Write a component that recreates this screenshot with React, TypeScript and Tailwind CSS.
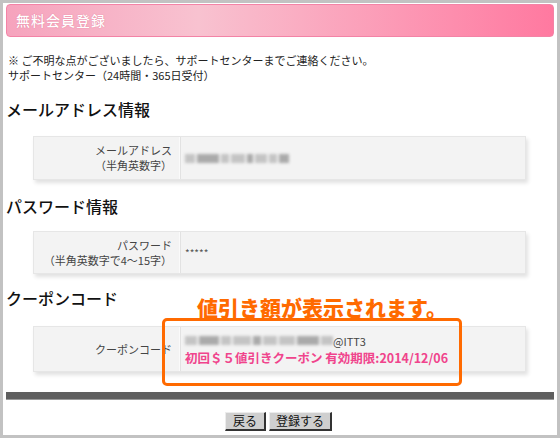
const jp = "font-['MS_PGothic','Noto_Sans_CJK_JP',sans-serif]";

function Blur({ widths }: { widths: number[] }) {
  return (
    <span className="inline-flex items-center gap-[2px] blur-[1.5px] align-middle">
      {widths.map((w, i) => (
        <span
          key={i}
          className={`inline-block h-[9px] ${i % 3 === 1 ? "bg-[#aaaaaa]" : "bg-[#c4c4c4]"}`}
          style={{ width: w }}
        />
      ))}
    </span>
  );
}

function Row({
  label,
  sub,
  children,
  h,
}: {
  label: string;
  sub?: string;
  children: React.ReactNode;
  h: string;
}) {
  return (
    <div
      className={`ml-[27px] w-[493px] ${h} flex bg-[#f3f3f3] border border-[#e6e6e6] shadow-[2px_3px_4px_rgba(0,0,0,0.12)]`}
    >
      <div className="w-[146px] shrink-0 flex flex-col justify-center items-end pr-[7px] text-[11px] leading-[15px] text-[#444] border-r border-[#fafafa]">
        <span>{label}</span>
        {sub && <span>{sub}</span>}
      </div>
      <div className="flex-1 flex flex-col justify-center pl-[4px] text-[11px] text-[#333] border-l border-[#e2e2e2]">
        {children}
      </div>
    </div>
  );
}

export default function App() {
  return (
    <div
      className={`relative w-[560px] h-[438px] bg-white border-[3px] border-[#c2c2c2] ${jp} overflow-hidden`}
    >
      <div className="px-[3px] pt-[1px]">
        {/* header */}
        <div className="h-[33px] rounded-[4px] border border-[#f383a6] bg-[linear-gradient(to_right,#f6a3bd,#f8c2d0_35%,#ff79a0)] flex items-center pl-[9px]">
          <span className="text-white text-[14px] font-medium tracking-[1px] [text-shadow:0_0_1px_rgba(200,60,100,0.6)]">
            無料会員登録
          </span>
        </div>

        {/* note */}
        <div className="mt-[16px] pl-[2px] text-[11px] leading-[15px] text-[#222]">
          <p>※ ご不明な点がございましたら、サポートセンターまでご連絡ください。</p>
          <p>サポートセンター（24時間・365日受付）</p>
        </div>

        <h2 className="mt-[16px] text-[16px] leading-[20px] text-[#111] font-medium">
          メールアドレス情報
        </h2>
        <div className="mt-[17px]">
          <Row label="メールアドレス" sub="（半角英数字）" h="h-[44px]">
            <Blur widths={[10, 22, 8, 14, 6, 12, 8, 10]} />
          </Row>
        </div>

        <h2 className="mt-[16px] text-[16px] leading-[20px] text-[#111] font-medium">
          パスワード情報
        </h2>
        <div className="mt-[15px]">
          <Row label="パスワード" sub="（半角英数字で4～15字）" h="h-[43px]">
            <span className="text-[10px] leading-none text-[#555]">*****</span>
          </Row>
        </div>

        <h2 className="mt-[14px] text-[16px] leading-[20px] text-[#111] font-medium">
          クーポンコード
        </h2>
        <div className="mt-[18px]">
          <Row label="クーポンコード" h="h-[46px]">
            <div className="flex items-center leading-[16px]">
              <Blur widths={[12, 20, 10, 18, 8, 14, 16, 22, 12]} />
              <span className="text-[11px] text-[#444]">@ITT3</span>
            </div>
            <div className="mt-[1px] text-[12.5px] leading-[16px] font-bold text-[#f0448c] whitespace-nowrap">
              初回＄５値引きクーポン 有効期限:2014/12/06
            </div>
          </Row>
        </div>

        {/* bar */}
        <div className="mt-[20px] h-[8px] bg-[#5f5f5f] border-b border-[#9a9a9a]" />

        {/* buttons */}
        <div className="mt-[12px] flex justify-center gap-[3px] pr-[3px]">
          <button className="w-[41px] h-[19px] bg-[#cfcfcf] border-t border-l border-[#ececec] border-r-2 border-b-2 border-r-[#333] border-b-[#333] text-[12px] leading-none text-[#111]">
            戻る
          </button>
          <button className="w-[63px] h-[19px] bg-[#cfcfcf] border-t border-l border-[#ececec] border-r-2 border-b-2 border-r-[#333] border-b-[#333] text-[12px] leading-none text-[#111]">
            登録する
          </button>
        </div>
      </div>

      {/* annotation overlay */}
      <div className="absolute left-[194px] top-[292px] text-[21px] leading-[24px] font-black text-[#ff6a00] [text-shadow:-1px_-1px_0_#fff,1px_-1px_0_#fff,-1px_1px_0_#fff,1px_1px_0_#fff,0_2px_0_#fff]">
        値引き額が表示されます。
      </div>
      <div className="absolute left-[159px] top-[315px] w-[300px] h-[68px] border-[3px] border-[#ff6a00] rounded-[5px]" />
    </div>
  );
}
